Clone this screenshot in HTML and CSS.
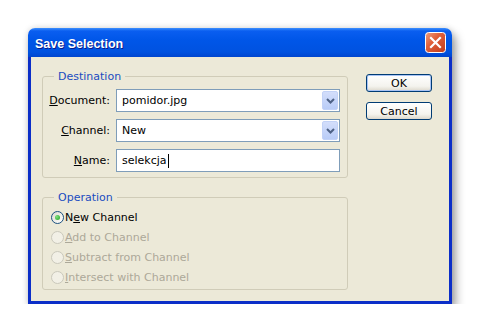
FILE: index.html
```html
<!DOCTYPE html>
<html>
<head>
<meta charset="utf-8">
<link rel="stylesheet" href="styles.css">
</head>
<body>
<div class="window">
  <div class="titlebar">
    <span class="title">Save Selection</span>
    <span class="close">
      <svg width="21" height="21" viewBox="0 0 21 21">
        <defs>
          <linearGradient id="cg" x1="0" y1="0" x2="1" y2="1">
            <stop offset="0" stop-color="#f0a082"/>
            <stop offset="0.4" stop-color="#e0603a"/>
            <stop offset="1" stop-color="#c13c1c"/>
          </linearGradient>
        </defs>
        <rect x="0.5" y="0.5" width="20" height="20" rx="3" fill="url(#cg)" stroke="#ffffff"/>
        <path d="M6 6 L15 15 M15 6 L6 15" stroke="#ffffff" stroke-width="2.2" stroke-linecap="square"/>
      </svg>
    </span>
  </div>
  <div class="client">
    <div class="groups">
      <fieldset class="group dest">
        <legend>Destination</legend>
        <div class="form">
          <label class="lbl"><u>D</u>ocument:</label>
          <div class="field select">
            <span class="val">pomidor.jpg</span>
            <span class="drop"><svg width="9" height="6" viewBox="0 0 9 6"><path d="M1 1 L4.5 4.5 L8 1" fill="none" stroke="#4d6185" stroke-width="2"/></svg></span>
          </div>
          <label class="lbl"><u>C</u>hannel:</label>
          <div class="field select">
            <span class="val">New</span>
            <span class="drop"><svg width="9" height="6" viewBox="0 0 9 6"><path d="M1 1 L4.5 4.5 L8 1" fill="none" stroke="#4d6185" stroke-width="2"/></svg></span>
          </div>
          <label class="lbl"><u>N</u>ame:</label>
          <div class="field">
            <span class="val">selekcja</span><span class="caret"></span>
          </div>
        </div>
      </fieldset>
      <fieldset class="group op">
        <legend>Operation</legend>
        <div class="radios">
          <div class="radio checked"><span class="dot"></span><span>N<u>e</u>w Channel</span></div>
          <div class="radio disabled"><span class="dot"></span><span><u>A</u>dd to Channel</span></div>
          <div class="radio disabled"><span class="dot"></span><span><u>S</u>ubtract from Channel</span></div>
          <div class="radio disabled"><span class="dot"></span><span><u>I</u>ntersect with Channel</span></div>
        </div>
      </fieldset>
    </div>
    <div class="buttons">
      <button class="btn default">OK</button>
      <button class="btn">Cancel</button>
    </div>
  </div>
</div>
</body>
</html>
```

FILE: styles.css
```css
html, body {
  margin: 0;
  background: #ffffff;
}
body {
  padding: 28px 0 0 28px;
  font-family: "DejaVu Sans", sans-serif;
  font-size: 11px;
  color: #000;
}
.window {
  width: 424px;
  border-radius: 7px 7px 0 0;
  box-shadow: 4px 6px 10px rgba(0,0,0,0.35), 0 0 6px rgba(0,0,0,0.15);
}
.titlebar {
  height: 29px;
  box-sizing: border-box;
  display: flex;
  align-items: center;
  justify-content: space-between;
  padding: 0 6px 0 7px;
  border-radius: 7px 7px 0 0;
  background: linear-gradient(to bottom, #3d8ffd 0px, #0a5ef0 3px, #0056e8 12px, #0052e0 24px, #0045cf 29px);
}
.title {
  font-family: "Liberation Sans", sans-serif;
  font-weight: bold;
  font-size: 12.5px;
  color: #ffffff;
  text-shadow: 1px 1px 0 #0a1c8c;
  margin-top: 2px;
}
.close {
  display: flex;
  width: 21px;
  height: 21px;
}
.client {
  display: flex;
  align-items: flex-start;
  background: #ece9d8;
  border: 3px solid #0b2ec8;
  border-top: 0;
  padding: 13px 0 11px 11px;
}
.groups {
  width: 306px;
  display: flex;
  flex-direction: column;
  gap: 13px;
}
.group {
  margin: 0;
  min-width: 0;
  border: 1px solid #d0ccb8;
  border-radius: 3px;
  padding: 6px 7px 5px 5px;
}
.group.op {
  padding: 3px 7px 2px 5px;
}
legend {
  margin-left: 6px;
  padding: 0 4px;
  line-height: 13px;
  color: #1a4cc0;
  font-size: 11px;
}
.form {
  display: grid;
  grid-template-columns: 62px 1fr;
  column-gap: 6px;
  row-gap: 7px;
  align-items: center;
}
.lbl {
  text-align: right;
  white-space: nowrap;
}
.field {
  height: 23px;
  box-sizing: border-box;
  border: 1px solid #7f9db9;
  background: #ffffff;
  display: flex;
  align-items: center;
  padding-left: 5px;
}
.drop {
  margin-left: auto;
  margin-right: 1px;
  width: 16px;
  height: 19px;
  box-sizing: border-box;
  border: 1px solid #c2d2f7;
  border-radius: 2px;
  background: linear-gradient(to bottom, #d3defb, #b9ccf7);
  display: flex;
  align-items: center;
  justify-content: center;
}
.caret {
  display: inline-block;
  width: 1px;
  height: 14px;
  background: #000;
  margin-left: 1px;
}
.radios {
  margin-left: 3px;
}
.radio {
  height: 20px;
  display: flex;
  align-items: center;
  white-space: nowrap;
}
.dot {
  width: 13px;
  height: 13px;
  box-sizing: border-box;
  border-radius: 50%;
  border: 1px solid #1c5180;
  background: linear-gradient(135deg, #dcdad0, #ffffff);
  margin-right: 1px;
  display: flex;
  align-items: center;
  justify-content: center;
}
.checked .dot::after {
  content: "";
  width: 5px;
  height: 5px;
  border-radius: 50%;
  background: radial-gradient(circle at 35% 35%, #7fe07f, #21a121);
}
.disabled {
  color: #aca899;
}
.disabled .dot {
  border-color: #cac8bb;
  background: #f2f0e6;
}
.buttons {
  margin-left: 18px;
  padding-top: 4px;
  display: flex;
  flex-direction: column;
  gap: 10px;
}
.btn {
  width: 66px;
  height: 18px;
  padding: 0;
  border: 1px solid #003c74;
  border-radius: 3px;
  background: linear-gradient(to bottom, #ffffff, #f4f3ee 70%, #dcd8cc);
  font-family: "DejaVu Sans", sans-serif;
  font-size: 11px;
  color: #000;
}
.btn.default {
  box-shadow: inset 0 0 0 1px #a9c4f5;
}
```
